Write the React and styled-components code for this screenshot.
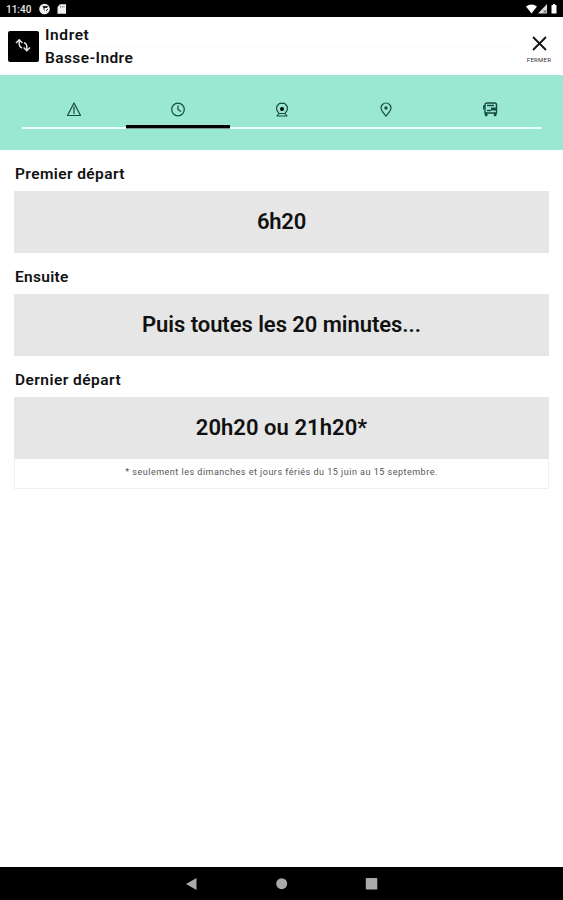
import React from 'react';
import styled, { createGlobalStyle } from 'styled-components';

const GlobalStyle = createGlobalStyle`
  * {
    box-sizing: border-box;
  }

  body {
    margin: 0;
    background-color: #fff;
    color: #111;
    font-family: Roboto, "Liberation Sans", sans-serif;
  }
`;

const Screen = styled.div`
  display: flex;
  flex-direction: column;
  height: 900px;
  overflow: hidden;
`;

const StatusBar = styled.div`
  display: flex;
  align-items: center;
  flex: none;
  height: 17px;
  padding: 1px 5px 0 6px;
  background-color: #000;
  color: #e8e8e8;

  svg {
    display: block;
  }
`;

const Clock = styled.span`
  width: 33px;
  font-size: 10px;
  font-weight: 500;
  line-height: 17px;
`;

const StatusIcons = styled.div`
  margin-left: auto;
`;

const Header = styled.header`
  display: flex;
  flex: none;
  height: 58px;
  padding: 14px 10px 0 8px;
`;

const SwapButton = styled.button`
  display: flex;
  align-items: center;
  justify-content: center;
  width: 31px;
  height: 31px;
  padding: 0 1px 3px 0;
  border: none;
  border-radius: 2px;
  background-color: #000;
`;

const Stops = styled.div`
  flex: 1;
  margin: -7px 12px 0 6px;
`;

const Stop = styled.div`
  height: 22px;
  font-size: 15.5px;
  font-weight: 600;
  line-height: 23px;
  letter-spacing: ${(props) => props.$spacing};

  & + & {
    border-top: 1px solid #f8f8f8;
    line-height: 22px;
  }
`;

const CloseButton = styled.button`
  display: flex;
  flex-direction: column;
  align-items: center;
  width: 28px;
  height: 40px;
  padding: 5px 0 0;
  border: none;
  background: none;
  color: #333;
  font-family: Roboto, sans-serif;
  font-size: 6px;
  line-height: 8px;
  letter-spacing: 0.25px;

  svg {
    display: block;
    margin-bottom: 5px;
  }
`;

const TabBar = styled.nav`
  display: flex;
  align-items: flex-start;
  flex: none;
  height: 75px;
  padding: 0 21px 0 22px;
  background-color: #9ae7d2;
`;

const Tab = styled.div`
  display: flex;
  flex: 1;
  justify-content: center;
  height: 54px;
  padding: 26px 1px 0 0;
  border-bottom: 2px solid #e9fff9;

  ${(props) => props.$active && `
    height: 53px;
    border-bottom: 3px solid #000;
    box-shadow: 0 1px 0 #7f9c94;
  `}
`;

const Content = styled.main`
  flex: 1;
  padding: 13px 14px 0;
`;

const Section = styled.section`
  height: 103px;
`;

const Label = styled.h2`
  height: 28px;
  margin: 0 0 0 1px;
  font-size: 15.5px;
  font-weight: 600;
  line-height: 22px;
  letter-spacing: ${(props) => props.$spacing};
`;

const Schedule = styled.div`
  height: 62px;
  background-color: #e6e6e6;
  font-size: 22px;
  font-weight: 600;
  line-height: 61px;
  text-align: center;
  letter-spacing: ${(props) => props.$spacing};
`;

const Note = styled.p`
  height: 30px;
  margin: 0;
  border: 1px solid #f0f0f0;
  border-top: none;
  color: #555;
  font-size: 9px;
  line-height: 26px;
  text-align: center;
  letter-spacing: 0.5px;
`;

const NavBar = styled.div`
  display: flex;
  align-items: center;
  justify-content: center;
  gap: 74px;
  flex: none;
  height: 33px;
  background-color: #000;
`;

const iconProps = {
  width: 16,
  height: 16,
  viewBox: '0 0 16 16',
  fill: 'none',
  stroke: '#174b40',
  strokeWidth: 1.2,
  strokeLinejoin: 'round',
};

const AlertIcon = () => (
  <svg {...iconProps}>
    <path d="M8 2 14.5 14.5H1.5Z" />
    <path d="M8 5.5v7.5" />
  </svg>
);

const TimeIcon = () => (
  <svg {...iconProps}>
    <circle cx="8" cy="8.5" r="6.3" />
    <path d="M8 4.5v4l3 2" />
  </svg>
);

const StationIcon = () => (
  <svg {...iconProps}>
    <path d="M5 12.5 2.7 9V5.5L5.5 2.3h5l2.8 3.2V9L11 12.5Z" />
    <path d="M5 12.5 3 15M11 12.5l2 2.5M2.5 15h11" />
    <circle cx="8" cy="8" r="2" fill="#000" stroke="none" />
  </svg>
);

const PlaceIcon = () => (
  <svg {...iconProps}>
    <path d="M8 15.2C5.5 12 3 9.5 3 7a5 5 0 0 1 10 0c0 2.5-2.5 5-5 8.2Z" />
    <circle cx="8" cy="7" r="1.7" fill="#174b40" stroke="none" />
  </svg>
);

const BusIcon = () => (
  <svg {...iconProps} strokeWidth="1.4">
    <path d="M3 12V4Q3 2 5 2h7.500Q14.500 2 14.500 4v8H3Z" />
    <path d="M3 5H1.700v3.500M5 4.500h7M5 9.500h4" />
    <path d="M3.500 12v2.500h1.300V12M12.500 12v2.500h1.300V12" fill="#174b40" />
    <path d="M9 6.500h5v3H9Z" fill="#174b40" stroke="none" />
  </svg>
);

const tabs = [
  { name: 'alert', icon: AlertIcon },
  { name: 'time', icon: TimeIcon },
  { name: 'station', icon: StationIcon },
  { name: 'place', icon: PlaceIcon },
  { name: 'bus', icon: BusIcon },
];

const sections = [
  { label: 'Premier départ', value: '6h20', labelSpacing: '0.4px', spacing: '-0.2px' },
  { label: 'Ensuite', value: 'Puis toutes les 20 minutes...', labelSpacing: '0.3px', spacing: '-0.05px' },
  {
    label: 'Dernier départ',
    value: '20h20 ou 21h20*',
    labelSpacing: '0.45px',
    spacing: '0.05px',
    note: '* seulement les dimanches et jours fériés du 15 juin au 15 septembre.',
  },
];

function App() {
  return (
    <Screen>
      <GlobalStyle />
      <StatusBar>
        <Clock>11:40</Clock>
        <svg width="28" height="12" viewBox="0 0 28 12">
          <circle cx="5.5" cy="6" r="5.3" fill="#f2f2f2" />
          <path d="M3.5 3h5.5l-1 2H5.5v3.500Z" fill="#222" />
          <path d="m7 8 2-2" stroke="#222" />
          <path d="M21 1.3h6v9.4h-8.5V4Z" fill="#f2f2f2" />
          <path d="M21.5 3v1.5M23.3 3v1.5M25 3v1.5" stroke="#555" strokeWidth=".7" />
        </svg>
        <StatusIcons>
          <svg width="32" height="12" viewBox="0 0 32 12">
            <path d="M0 3.5Q5.5-.5 11 3.5L5.5 10.5Z" fill="#fff" />
            <path d="M21 1v9.5h-9Z" fill="#ddd" />
            <path d="m17.5 7 3 3m0-3-3 3" stroke="#444" strokeWidth=".8" />
            <path d="M25.5 2h1.5V1h2v1h1.5v8.5h-5Z" fill="#fff" />
          </svg>
        </StatusIcons>
      </StatusBar>

      <Header>
        <SwapButton aria-label="Inverser">
          <svg width="16" height="16" viewBox="0 0 16 16" fill="none" stroke="#e5e5e5" strokeWidth="1.5">
            <path d="M1 6 4.2 2.8 7.4 6M4.2 3v4.500q0 2 2.800 3.500" />
            <path d="m8.600 10.500 3.200 3.200 3.200-3.200M11.800 13.500V9q0-2-2.800-3.500" />
          </svg>
        </SwapButton>
        <Stops>
          <Stop $spacing="0.6px">Indret</Stop>
          <Stop $spacing="0.4px">Basse-Indre</Stop>
        </Stops>
        <CloseButton>
          <svg width="15" height="15" viewBox="0 0 15 15" stroke="#111" strokeWidth="1.8">
            <path d="m1 1 13 13M14 1 1 14" />
          </svg>
          FERMER
        </CloseButton>
      </Header>

      <TabBar>
        {tabs.map(({ name, icon: Icon }) => (
          <Tab key={name} $active={name === 'time'}>
            <Icon />
          </Tab>
        ))}
      </TabBar>

      <Content>
        {sections.map((section) => (
          <Section key={section.label}>
            <Label $spacing={section.labelSpacing}>{section.label}</Label>
            <Schedule $spacing={section.spacing}>{section.value}</Schedule>
            {section.note && <Note>{section.note}</Note>}
          </Section>
        ))}
      </Content>

      <NavBar>
        <svg width="16" height="16" viewBox="0 0 16 16">
          <path d="M2 8 12.5 2v12Z" fill="#aaa" />
        </svg>
        <svg width="16" height="16" viewBox="0 0 16 16">
          <circle cx="7.7" cy="7.7" r="5.5" fill="#aaa" />
        </svg>
        <svg width="16" height="16" viewBox="0 0 16 16">
          <rect x="1.8" y="2" width="11.5" height="11.5" rx=".8" fill="#aaa" />
        </svg>
      </NavBar>
    </Screen>
  );
}

export default App;
